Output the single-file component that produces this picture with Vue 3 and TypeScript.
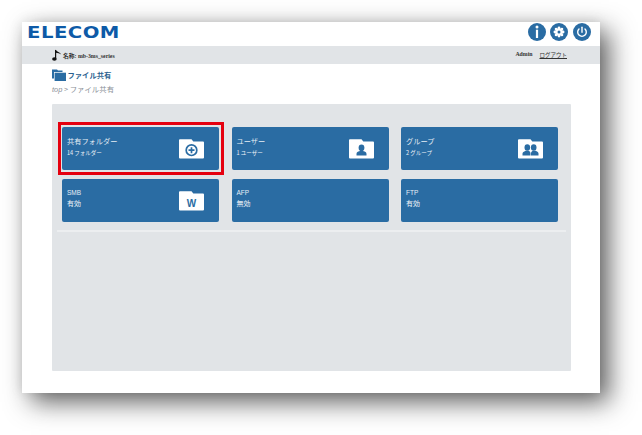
<script setup lang="ts">
interface Card { title: string; sub: string; icon?: string; small: boolean; highlight?: boolean }
const cards: Card[] = [
  { title: '共有フォルダー', sub: '14 フォルダー', icon: 'plus', small: true, highlight: true },
  { title: 'ユーザー', sub: '1 ユーザー', icon: 'user', small: true },
  { title: 'グループ', sub: '2 グループ', icon: 'group', small: true },
  { title: 'SMB', sub: '有効', icon: 'w', small: false },
  { title: 'AFP', sub: '無効', small: false },
  { title: 'FTP', sub: '有効', small: false },
]
</script>

<template>
  <div class="page">
    <div class="window">
      <header class="top">
        <span class="logo">ELECOM</span>
        <div class="actions">
          <span class="round"><svg width="18" height="18" viewBox="0 0 18 18"><circle cx="9" cy="4" r="1.500" fill="#fff"/><rect x="7.900" y="6.700" width="2.200" height="8.300" fill="#fff"/></svg></span>
          <span class="round"><svg width="18" height="18" viewBox="0 0 18 18"><g fill="#fff"><circle cx="9" cy="9" r="3.800"/><circle cx="9" cy="4.900" r="1.400"/><circle cx="9" cy="13.100" r="1.400"/><circle cx="4.900" cy="9" r="1.400"/><circle cx="13.100" cy="9" r="1.400"/><circle cx="6.100" cy="6.100" r="1.400"/><circle cx="11.900" cy="6.100" r="1.400"/><circle cx="6.100" cy="11.900" r="1.400"/><circle cx="11.900" cy="11.900" r="1.400"/></g><circle cx="9" cy="9" r="1.500" fill="#2a6ca3"/></svg></span>
          <span class="round"><svg width="18" height="18" viewBox="0 0 18 18"><path d="M6 6a4.300 4.300 0 1 0 6 0" fill="none" stroke="#fff" stroke-width="1.400" stroke-linecap="round"/><path d="M9 4.200v5" stroke="#fff" stroke-width="1.400" stroke-linecap="round"/></svg></span>
        </div>
      </header>
      <div class="bar">
        <div class="device">
          <svg width="10" height="13" viewBox="0 0 10 13"><path d="M3.600 1v8.500" stroke="#111" stroke-width="1.200"/><ellipse cx="2.400" cy="10" rx="2.300" ry="1.700" fill="#111"/><path d="M3.600 .6c1 2.400 4.600 2.400 5.600 5-1.400-1.400-3.600-1.600-5.600-1.800z" fill="#111"/></svg>
          <span>名称: mb-3ms_series</span>
        </div>
        <div class="account"><span>Admin</span><a>ログアウト</a></div>
      </div>
      <h1 class="title">
        <svg width="14" height="12" viewBox="0 0 14 12"><path d="M0 .5h5l1 1h4.500V3H2v6.500H0z" fill="#2a6ca3"/><path d="M2.600 3.700h11.400V12H2.600z" fill="#2a6ca3"/></svg>
        <span>ファイル共有</span>
      </h1>
      <p class="crumb"><i>top</i> &gt; ファイル共有</p>
      <main class="panel">
        <div class="grid">
          <div v-for="c in cards" :key="c.title" class="card" :class="{ hl: c.highlight }">
            <div class="text" :class="{ tight: !c.small }">
              <div class="name" :class="{ small: !c.small }">{{ c.title }}</div>
              <div class="sub" :class="{ large: !c.small }">{{ c.sub }}</div>
            </div>
            <svg v-if="c.icon" class="folder" width="25" height="20" viewBox="0 0 25 20">
              <path d="M0 1Q0 .2 1 .2h11.500l1.800 2.200H24Q25 2.400 25 3.400V18.600Q25 19.600 24 19.600H1Q0 19.600 0 18.600z" fill="#fff"/>
              <g v-if="c.icon === 'plus'" fill="none" stroke="#2a6ca3"><circle cx="12.500" cy="11.200" r="5.300" stroke-width="1.700"/><path d="M9.500 11.200h6M12.500 8.200v6" stroke-width="1.700"/></g>
              <g v-else-if="c.icon === 'user'" fill="#2a6ca3"><ellipse cx="12.500" cy="8.800" rx="2.900" ry="3.400"/><path d="M7.500 16.500v-1.700c0-1.700 2.400-2.300 3.600-2.700h2.800c1.200 .4 3.600 1 3.600 2.700v1.700z"/></g>
              <g v-else-if="c.icon === 'group'" fill="#2a6ca3"><ellipse cx="9.300" cy="8.500" rx="2.800" ry="3.200"/><ellipse cx="15.700" cy="8.500" rx="2.800" ry="3.200"/><path d="M4.500 16.500v-2c0-1.600 2.300-2.200 3.300-2.700h2.900c1 .5 1.800 1 1.800 2.700v2zM13 16.500v-2c0-1.700.8-2.200 1.800-2.700h2.900c1 .5 2.800 1.100 2.800 2.700v2z"/></g>
              <text v-else x="12.500" y="15.500" text-anchor="middle" class="w">W</text>
            </svg>
            <span v-if="c.highlight" class="outline"></span>
          </div>
        </div>
        <div class="rule"></div>
      </main>
    </div>
  </div>
</template>

<style>
html, body { margin: 0; background: #fff; }
</style>

<style scoped>
.page { width: 642px; height: 435px; box-sizing: border-box; padding: 22px 42px 42px 22px; overflow: hidden; background: #fff; font-family: "Noto Sans CJK JP", "Noto Sans", sans-serif; }
.window { width: 578px; height: 371px; background: #fff; box-shadow: 9px 9px 24px rgba(20,20,20,.68), -1px -1px 12px rgba(0,0,0,.08); display: flex; flex-direction: column; }
.top { height: 24px; display: flex; justify-content: space-between; align-items: center; padding: 0 9.500px 0 5px; }
.logo { font: 700 16.500px "DejaVu Sans", sans-serif; letter-spacing: .4px; color: #0d5aa7; line-height: 20px; margin-top: -2px; transform: scaleX(1.19); transform-origin: left center; }
.actions { display: flex; gap: 4.500px; margin-top: -4px; }
.round { width: 18px; height: 18px; border-radius: 50%; background: #2a6ca3; display: block; }
.round svg { display: block; }
.bar { height: 18px; background: #e1e4e7; display: flex; justify-content: space-between; align-items: center; padding: 0 33px 0 30px; font-size: 5.800px; font-weight: 700; color: #333; font-family: "Liberation Serif", "Noto Sans CJK JP", serif; }
.device { display: flex; align-items: center; gap: 1px; }
.account { display: flex; gap: 7px; }
.account a { text-decoration: underline; font-family: "Noto Sans CJK JP", sans-serif; font-weight: 400; font-size: 5.500px; }
.title { margin: 4.500px 0 0 30px; height: 13px; display: flex; align-items: center; gap: 1.500px; font-size: 7.300px; font-weight: 700; color: #2a5f8f; line-height: 13px; }
.crumb { margin: 1.500px 0 0 30px; font-size: 7.400px; line-height: 12px; color: #8a9097; }
.crumb i { font-family: "Liberation Sans", sans-serif; }
.panel { margin: 8px 0 0 30px; width: 519px; height: 267px; box-sizing: border-box; background: #e1e4e7; padding: 23px 5px 0; border-radius: 1px; }
.grid { display: grid; grid-template-columns: 157px 157px 157px; column-gap: 12.500px; row-gap: 9px; padding-left: 5px; grid-auto-rows: 43px; }
.card { position: relative; background: #2a6ca3; border-radius: 2px; color: #fff; display: flex; align-items: center; justify-content: space-between; padding: 0 15px 0 5px; }
.name { font-size: 7.200px; line-height: 10px; color: #e6eef5; }
.name.small { font-family: "Liberation Sans", sans-serif; font-size: 6.500px; }
.sub { font-size: 5.500px; line-height: 9px; margin-top: 3px; color: #eef3f8; }
.sub.large { font-size: 7px; line-height: 10px; margin-top: 0; }
.text { margin-top: -3px; }
.text.tight { margin-top: -5px; }
.folder { flex: none; margin-top: 0; }
.w { font: 700 10px "Liberation Sans", sans-serif; fill: #2a6ca3; }
.outline { position: absolute; inset: -5.500px -5px -5px -4.500px; border: 3.500px solid #e5000f; pointer-events: none; }
.rule { height: 2px; margin-top: 8px; background: #eceef0; }
</style>
